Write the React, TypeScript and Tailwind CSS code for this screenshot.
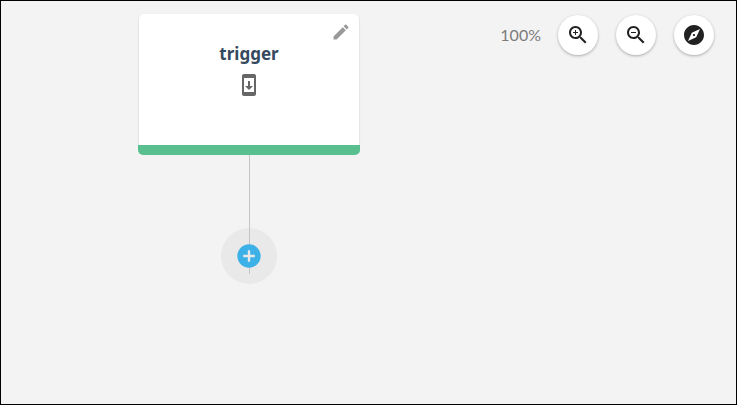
import type { ReactNode } from 'react';

const ICONS = {
  edit: 'M3 17.25V21h3.75L17.81 9.94l-3.75-3.75L3 17.25zM20.71 7.04c.39-.39.39-1.02 0-1.41l-2.34-2.34c-.39-.39-1.02-.39-1.41 0l-1.83 1.83 3.75 3.75 1.83-1.83z',
  update:
    'M17 1.01L7 1c-1.1 0-2 .9-2 2v18c0 1.1.9 2 2 2h10c1.1 0 2-.9 2-2V3c0-1.1-.9-1.99-2-1.99zM17 19H7V5h10v14zm-1-6h-3V8h-2v5H8l4 4 4-4z',
  zoomIn:
    'M15.5 14h-.79l-.28-.27C15.41 12.59 16 11.11 16 9.5 16 5.91 13.09 3 9.5 3S3 5.91 3 9.5 5.91 16 9.5 16c1.61 0 3.09-.59 4.23-1.57l.27.28v.79l5 4.99L20.49 19l-4.99-5zm-6 0C7.01 14 5 11.99 5 9.5S7.01 5 9.5 5 14 7.01 14 9.5 11.99 14 9.5 14zM12 10h-2v2H9v-2H7V9h2V7h1v2h2v1z',
  zoomOut:
    'M15.5 14h-.79l-.28-.27C15.41 12.59 16 11.11 16 9.5 16 5.91 13.09 3 9.5 3S3 5.91 3 9.5 5.91 16 9.5 16c1.61 0 3.09-.59 4.23-1.57l.27.28v.79l5 4.99L20.49 19l-4.99-5zm-6 0C7.01 14 5 11.99 5 9.5S7.01 5 9.5 5 14 7.01 14 9.5 11.99 14 9.5 14zM7 9h5v1H7z',
  explore:
    'M12 10.9c-.61 0-1.1.49-1.1 1.1s.49 1.1 1.1 1.1c.61 0 1.1-.49 1.1-1.1s-.49-1.1-1.1-1.1zM12 2C6.48 2 2 6.48 2 12s4.48 10 10 10 10-4.48 10-10S17.52 2 12 2zm2.19 12.19L6 18l3.81-8.19L18 6l-3.81 8.19z',
  addCircle:
    'M12 2C6.48 2 2 6.48 2 12s4.48 10 10 10 10-4.48 10-10S17.52 2 12 2zm5 11h-4v4h-2v-4H7v-2h4V7h2v4h4v2z',
};

function Icon({ name, className }: { name: keyof typeof ICONS; className: string }) {
  return (
    <svg viewBox="0 0 24 24" fill="currentColor" className={className} aria-hidden="true">
      <path d={ICONS[name]} />
    </svg>
  );
}

function RoundButton({ label, children }: { label: string; children: ReactNode }) {
  return (
    <button
      aria-label={label}
      className="flex size-10 items-center justify-center rounded-full bg-white text-[#212121] shadow-[0_1px_3px_rgba(0,0,0,0.3)]"
    >
      {children}
    </button>
  );
}

function TriggerNode() {
  return (
    <div className="absolute left-[137px] top-[13px] flex w-[222px] flex-col items-center">
      <div className="relative flex h-[131px] w-[220px] flex-col items-center rounded-t-[5px] bg-white pt-7 shadow-[0_1px_2px_rgba(0,0,0,0.2)]">
        <button aria-label="Edit" className="absolute right-2 top-2 text-[#999999]">
          <Icon name="edit" className="size-5" />
        </button>
        <h2 className="font-['Noto_Sans',sans-serif] text-[17px] font-bold leading-6 text-[#34495e]">trigger</h2>
        <Icon name="update" className="mt-[7px] size-6 text-[#666666]" />
      </div>
      <div className="relative h-2.5 w-full rounded-b-[5px] bg-[#5abf8f]" />
    </div>
  );
}

function AddStep() {
  return (
    <>
      <div className="absolute left-[220px] top-[227px] size-14 rounded-full bg-[#e9e9e9]" />
      <div className="absolute left-[248px] top-[154px] h-[119px] w-px bg-[#c4c4c4]" />
      <button
        aria-label="Add step"
        className="absolute left-[220px] top-[227px] flex size-14 items-center justify-center rounded-full text-[#3cb1e8]"
      >
        <span className="absolute size-4 bg-[#e9e9e9]" />
        <Icon name="addCircle" className="relative size-7" />
      </button>
    </>
  );
}

export default function App() {
  return (
    <main className="relative h-[405px] w-[737px] overflow-hidden border border-black bg-[#f3f3f3]">
      <TriggerNode />
      <AddStep />
      <div className="flex items-center justify-end pr-[22px] pt-3.5">
        <span className="mr-[17px] font-[Lato,sans-serif] text-base leading-10 text-[#7b7b7b]">100%</span>
        <div className="flex gap-[18px]">
          <RoundButton label="Zoom in">
            <Icon name="zoomIn" className="size-6" />
          </RoundButton>
          <RoundButton label="Zoom out">
            <Icon name="zoomOut" className="size-6" />
          </RoundButton>
          <RoundButton label="Fit view">
            <Icon name="explore" className="size-6" />
          </RoundButton>
        </div>
      </div>
    </main>
  );
}
